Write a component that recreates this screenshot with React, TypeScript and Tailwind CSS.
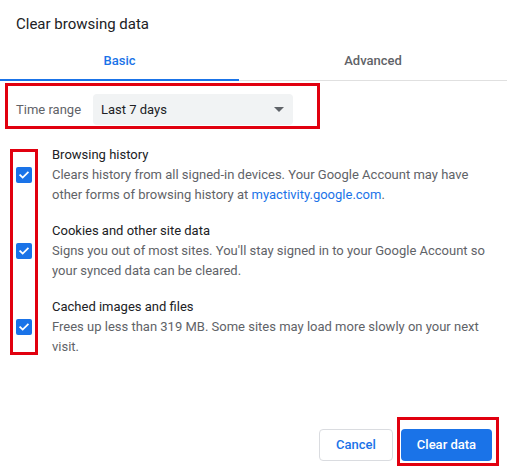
import React from "react";

const RED = "border-[#e1000f]";

type Item = {
  title: string;
  body: React.ReactNode;
};

const items: Item[] = [
  {
    title: "Browsing history",
    body: (
      <>
        Clears history from all signed-in devices. Your Google Account may have
        other forms of browsing history at{" "}
        <span className="text-[#1a73e8]">myactivity.google.com</span>.
      </>
    ),
  },
  {
    title: "Cookies and other site data",
    body: "Signs you out of most sites. You'll stay signed in to your Google Account so your synced data can be cleared.",
  },
  {
    title: "Cached images and files",
    body: "Frees up less than 319 MB. Some sites may load more slowly on your next visit.",
  },
];

const CheckBox = () => (
  <div className="w-4 h-4 rounded-[2px] bg-[#1a73e8] flex items-center justify-center flex-none">
    <svg width="12" height="12" viewBox="0 0 12 12" fill="none">
      <path
        d="M2.2 6.2l2.5 2.4L9.8 3.6"
        stroke="white"
        strokeWidth="1.8"
        strokeLinecap="square"
      />
    </svg>
  </div>
);

export default function App() {
  return (
    <div className="w-[507px] h-[473px] bg-white flex flex-col font-['Roboto',sans-serif] text-[13px] text-[#5f6368] overflow-hidden">
      {/* Title */}
      <div className="h-[40px] pt-[14px] px-4 text-[15px] leading-5 text-[#202124]">
        Clear browsing data
      </div>

      {/* Tabs */}
      <div className="flex h-[41px] border-b border-[#e0e0e0] flex-none">
        <div className="w-[239px] h-[41px] -mb-px border-b-2 border-[#1a73e8] flex items-center justify-center pt-[2px] font-medium text-[#1a73e8]">
          Basic
        </div>
        <div className="flex-1 flex items-center justify-center pt-[2px] font-medium text-[#5f6368]">
          Advanced
        </div>
      </div>

      {/* Time range */}
      <div
        className={`mt-[2px] ml-[5px] w-[315px] h-[46px] border-[3px] ${RED} flex items-start pt-[8px] pl-[8px] flex-none`}
      >
        <div className="w-[77px] h-[31px] flex items-center">Time range</div>
        <div className="w-[200px] h-[31px] rounded bg-[#f1f3f4] flex items-center justify-between pl-2 pr-2 text-[#202124]">
          <span>Last 7 days</span>
          <span className="w-0 h-0 border-l-[5px] border-r-[5px] border-t-[5px] border-transparent border-t-[#5f6368] mr-[1px]" />
        </div>
      </div>

      {/* Checkbox items */}
      <div className="relative mt-[16px] pl-4 flex flex-col gap-4">
        {items.map((item) => (
          <div key={item.title} className="flex items-center">
            <CheckBox />
            <div className="ml-[20px] w-[436px] leading-5">
              <div className="text-[#202124]">{item.title}</div>
              <div>{item.body}</div>
            </div>
          </div>
        ))}
        <div
          className={`absolute left-[10px] top-[4px] w-[28px] h-[206px] border-[3px] ${RED}`}
        />
      </div>

      {/* Buttons */}
      <div className="mt-auto flex justify-end gap-2 pr-[15px] pb-[12px]">
        <button className="w-[74px] h-8 rounded border border-[#dadce0] text-[#1a73e8] font-medium">
          Cancel
        </button>
        <div className="relative">
          <button className="w-[91px] h-8 rounded bg-[#1a73e8] text-white font-medium">
            Clear data
          </button>
          <div
            className={`absolute -left-[4px] -right-[7px] -top-[12px] -bottom-[5px] border-[3px] ${RED}`}
          />
        </div>
      </div>
    </div>
  );
}
